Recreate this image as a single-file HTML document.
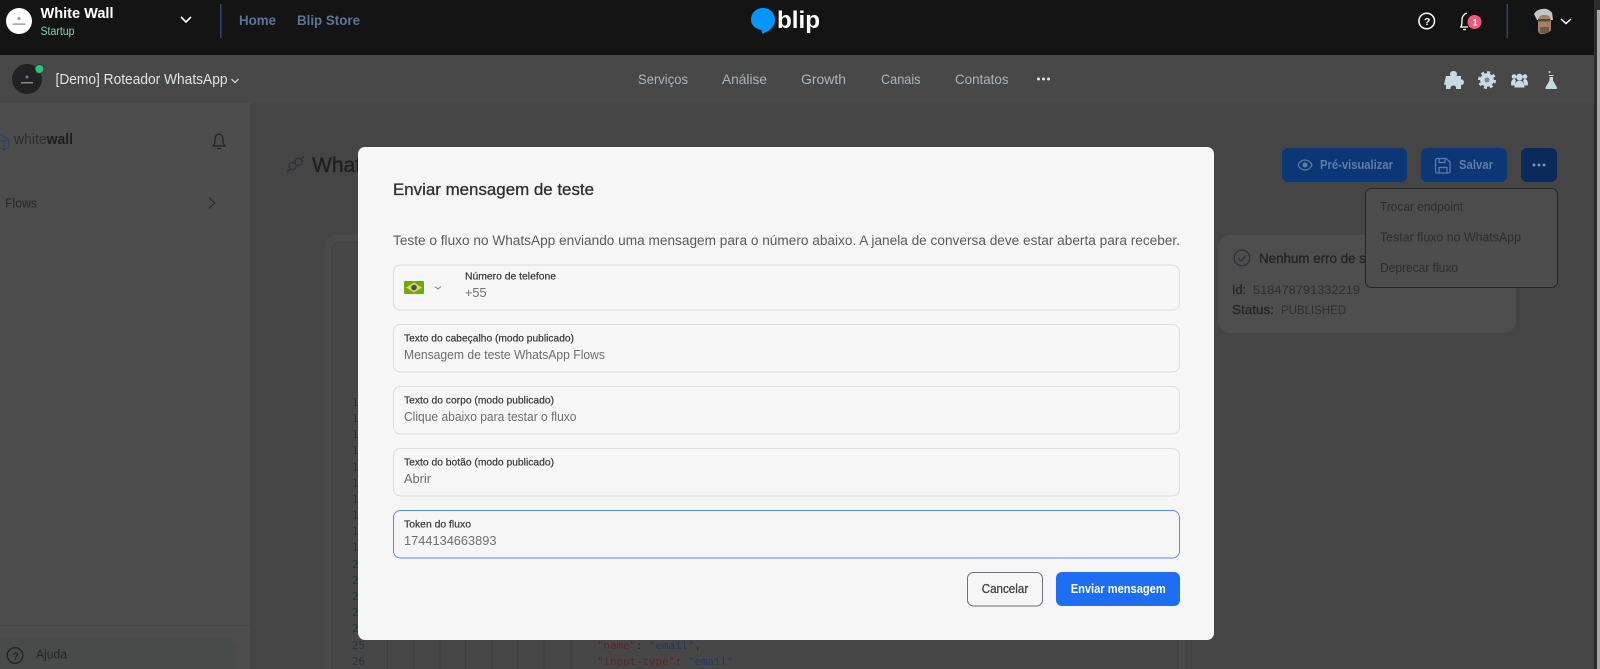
<!DOCTYPE html>
<html lang="pt-BR">
<head>
<meta charset="utf-8">
<title>Enviar mensagem de teste</title>
<style>
html,body{margin:0;padding:0;width:1600px;height:669px;overflow:hidden;background:#454545}
svg{display:block}
text{font-family:"Liberation Sans",sans-serif}
.m{font-family:"DejaVu Sans Mono","Liberation Mono",monospace;font-size:10.8px}
.lab{font-size:10.5px;fill:#3a3a3a;stroke:#3a3a3a;stroke-width:.22px}
.val{font-size:12.5px;fill:#6e6e6e}
.nav{font-size:14px;fill:#a9b5bb}
.dd{font-size:13px;fill:#2c2c2c}
.ln{fill:#1f3744}
</style>
</head>
<body>
<svg width="1600" height="669" viewBox="0 0 1600 669" xmlns="http://www.w3.org/2000/svg">
<defs><clipPath id="ua"><circle cx="1542" cy="21" r="13"/></clipPath></defs>
<rect width="1600" height="669" fill="#454545"/>

<!-- top bar -->
<rect width="1600" height="55" fill="#141414"/>
<circle cx="19" cy="21" r="13" fill="#fff"/>
<circle cx="19" cy="18.500" r="1.600" fill="#8ea6cf"/>
<rect x="12.500" y="23.500" width="13" height="1.200" fill="#888"/>
<text x="40.500" y="18" font-size="15" font-weight="700" fill="#fff" textLength="73" lengthAdjust="spacingAndGlyphs">White Wall</text>
<text x="40.500" y="35" font-size="11.500" fill="#7fd5a5" textLength="34" lengthAdjust="spacingAndGlyphs">Startup</text>
<path d="M181 17l5 5 5-5" fill="none" stroke="#fff" stroke-width="1.600"/>
<rect x="220" y="4" width="1.600" height="34" fill="#2c4568"/>
<text x="239" y="25" font-size="14" font-weight="700" fill="#5b7698" textLength="37" lengthAdjust="spacingAndGlyphs">Home</text>
<text x="297" y="25" font-size="14" font-weight="700" fill="#5b7698" textLength="63" lengthAdjust="spacingAndGlyphs">Blip Store</text>

<!-- blip logo -->
<path d="M763 8c7 0 12 5 12 12 0 6-4 10-9 12l-3.500 2-1-4c-6-1-10.500-5-10.500-10 0-7 5-12 12-12z" fill="#0096fa"/>
<text x="777" y="28" font-size="24" font-weight="700" fill="#fff" textLength="43" lengthAdjust="spacingAndGlyphs">blip</text>

<!-- right top icons -->
<circle cx="1426.700" cy="21" r="7.800" fill="none" stroke="#fff" stroke-width="1.500"/>
<text x="1424" y="25" font-size="10.500" font-weight="700" fill="#fff">?</text>
<path d="M1461 27c1-2 1-4 1-7 0-4 2-6 5-7M1460 27h8M1463 29.500h3" fill="none" stroke="#fff" stroke-width="1.300"/>
<circle cx="1474.500" cy="22" r="7" fill="#f2587e"/>
<text x="1472.500" y="25.500" font-size="9" font-weight="700" fill="#fff">1</text>
<rect x="1506.500" y="4" width="1.600" height="34" fill="#2c4568"/>
<g clip-path="url(#ua)">
<rect x="1529" y="8" width="26" height="26" fill="#10141a"/>
<path d="M1534 14c3-6 14-7 18-2l1 8h-16z" fill="#c4c4c4"/>
<rect x="1538" y="15" width="13" height="20" rx="5" fill="#a9805f"/>
<rect x="1538" y="19" width="12" height="2.500" fill="#41503f"/>
<rect x="1540" y="27" width="9" height="6" fill="#6d5a48"/>
</g>
<path d="M1561 19l5 4.500 5-4.500" fill="none" stroke="#fff" stroke-width="1.500"/>

<!-- second bar -->
<rect y="55" width="1600" height="48" fill="#484848"/>
<circle cx="27" cy="79" r="15" fill="#222"/>
<circle cx="27" cy="77" r="1.500" fill="#5f7fb0"/>
<rect x="21" y="82" width="12" height="1.500" fill="#888"/>
<circle cx="39.500" cy="69" r="5" fill="#2f3a3a"/>
<circle cx="39.500" cy="69" r="4" fill="#22c874"/>
<text x="55.500" y="84" font-size="14.500" fill="#dfe4e7" textLength="172" lengthAdjust="spacingAndGlyphs">[Demo] Roteador WhatsApp</text>
<path d="M231.500 79l3.500 3.500 3.500-3.500" fill="none" stroke="#dfe4e7" stroke-width="1.200"/>
<text class="nav" x="638" y="84" textLength="50" lengthAdjust="spacingAndGlyphs">Serviços</text>
<text class="nav" x="722" y="84" textLength="45" lengthAdjust="spacingAndGlyphs">Análise</text>
<text class="nav" x="801" y="84" textLength="45" lengthAdjust="spacingAndGlyphs">Growth</text>
<text class="nav" x="881" y="84" textLength="39.500" lengthAdjust="spacingAndGlyphs">Canais</text>
<text class="nav" x="955" y="84" textLength="53.500" lengthAdjust="spacingAndGlyphs">Contatos</text>
<circle cx="1038.500" cy="79" r="1.500" fill="#dfe4e7"/><circle cx="1043.500" cy="79" r="1.500" fill="#dfe4e7"/><circle cx="1048.500" cy="79" r="1.500" fill="#dfe4e7"/>

<!-- toolbar icons -->
<g fill="#c6dce4">
<path d="M1446 76h4.500c-1-2-.5-5 3-5s4 3 3 5h4.500v4c1.500-1 1-1 2 0 1.500 1 1 5-1 5-.5 0-.5 0-1-.5v4.500h-5c.5-2-.5-3.500-2.500-3.500s-3.500 1.500-3 3.500h-4.500v-4.500c-1 .5-1.500.5-2 0z"/>
<circle cx="1487" cy="80" r="6.800"/>
<circle cx="1487" cy="80" r="7.800" fill="none" stroke="#c6dce4" stroke-width="2.400" stroke-dasharray="3.100 3"/>
<path d="M1511 84c0-3 1.500-5 3-5s1.500 1 2 2c-1 1-1 2.500-1 4.500h-3.500zM1528 84c0-3-1.500-5-3-5s-1.500 1-2 2c1 1 1 2.500 1 4.500h3.500zM1514.500 87.500c0-4 2-7 5-7s5 3 5 7z"/>
<circle cx="1519.500" cy="77" r="3.300"/><circle cx="1514" cy="76.500" r="2.300"/><circle cx="1525" cy="76.500" r="2.300"/>
<path d="M1549.500 77h3.500v3.500l4 7c.4 1 0 1.500-1 1.500h-9.500c-1 0-1.400-.5-1-1.500l4-7z"/>
<circle cx="1549.500" cy="72" r="1"/>
<rect x="1549" y="75" width="4.500" height="1"/>
</g>
<circle cx="1487" cy="80" r="2.500" fill="#7d8a90"/>

<!-- sidebar -->
<rect y="103" width="250" height="566" fill="#4d4d4d"/>
<rect y="625" width="250" height="1" fill="#444"/>
<path d="M0 134l5 3 4 3v7l-5 3-4-2M0 141h9M4 141v9" fill="none" stroke="#27436d" stroke-width="1.100"/>
<text x="14" y="144" font-size="14.500" fill="#2e2e2e" textLength="59" lengthAdjust="spacingAndGlyphs">white<tspan font-weight="700" fill="#1e1e1e">wall</tspan></text>
<path d="M213 146c2-2 2-4 2-7 0-3 2-5 4-5s4 2 4 5c0 3 0 5 2 7zM217 148.500h4" fill="none" stroke="#222" stroke-width="1.200"/>
<text x="5" y="207.500" font-size="12.500" fill="#262626" textLength="32" lengthAdjust="spacingAndGlyphs">Flows</text>
<path d="M209 197.500l5.500 5.500-5.500 5.500" fill="none" stroke="#2a2a2a" stroke-width="1.200"/>
<rect x="-10" y="638" width="246" height="40" rx="10" fill="#474c4b"/>
<circle cx="15" cy="655.500" r="7.800" fill="none" stroke="#222" stroke-width="1.300"/>
<text x="12.500" y="659.500" font-size="10.500" font-weight="700" fill="#222">?</text>
<text x="36" y="658.500" font-size="12.500" fill="#262626" textLength="31" lengthAdjust="spacingAndGlyphs">Ajuda</text>

<!-- page title -->
<g fill="none" stroke="#2a2f3c" stroke-width="1.100">
<path d="M287 172l3-3"/><circle cx="292.500" cy="166" r="3.600"/><circle cx="298.500" cy="162" r="3.600"/><path d="M301 159l3-3"/>
</g>
<text x="312" y="172" font-size="21" fill="#1f1f1f" stroke="#1f1f1f" stroke-width=".35">WhatsApp Flows</text>

<!-- code panel -->
<rect x="325" y="235" width="860" height="460" rx="12" fill="#4a4a4a"/>
<rect x="332" y="242" width="846" height="460" rx="8" fill="#474747" stroke="#424242"/>
<g stroke="#3f3f3f" stroke-width="1">
<path d="M387.500 242V669M413.500 242V669M440 242V669M465.500 242V669M492 242V669M518 242V669M544 242V669M571 242V669"/>
</g>
<g class="m">
<text class="m ln" x="352" y="406">10</text><text class="m ln" x="352" y="422">11</text><text class="m ln" x="352" y="438">12</text><text class="m ln" x="352" y="454">13</text><text class="m ln" x="352" y="471">14</text><text class="m ln" x="352" y="487">15</text><text class="m ln" x="352" y="503">16</text><text class="m ln" x="352" y="519">17</text><text class="m ln" x="352" y="535">18</text><text class="m ln" x="352" y="551">19</text><text class="m ln" x="352" y="568">20</text><text class="m ln" x="352" y="584">21</text><text class="m ln" x="352" y="600">22</text><text class="m ln" x="352" y="616">23</text><text class="m ln" x="352" y="632">24</text><text class="m ln" x="352" y="649">25</text><text class="m ln" x="352" y="665">26</text>
<text class="m" x="597" y="649"><tspan fill="#5b2626">"name"</tspan><tspan fill="#2a2a2a">: </tspan><tspan fill="#1f3a5c">"email"</tspan><tspan fill="#2a2a2a">,</tspan></text>
<text class="m" x="597" y="665"><tspan fill="#5b2626">"input-type"</tspan><tspan fill="#2a2a2a">: </tspan><tspan fill="#1f3a5c">"email"</tspan></text>
</g>

<!-- action buttons -->
<rect x="1282" y="148" width="125" height="34" rx="6" fill="#0c3777"/>
<path d="M1298 165c2-4 4.500-5 7-5s5 1 7 5c-2 4-4.500 5-7 5s-5-1-7-5z" fill="none" stroke="#5f7ea6" stroke-width="1.200"/>
<circle cx="1305" cy="165" r="2.500" fill="#5f7ea6"/>
<text x="1320" y="169" font-size="12.500" font-weight="700" fill="#5f7ea6" textLength="73" lengthAdjust="spacingAndGlyphs">Pré-visualizar</text>
<rect x="1421" y="148" width="86" height="34" rx="6" fill="#0c3777"/>
<path d="M1437 158.500h9l4 3.500v9.500a1.500 1.500 0 0 1-1.500 1.500h-11.500a1.500 1.500 0 0 1-1.500-1.500v-11.500a1.500 1.500 0 0 1 1.500-1.500zM1439 158.500v4h6v-4M1439 172.500v-5h8v5" fill="none" stroke="#5f7ea6" stroke-width="1.200"/>
<text x="1459" y="169" font-size="12.500" font-weight="700" fill="#5f7ea6" textLength="34" lengthAdjust="spacingAndGlyphs">Salvar</text>
<rect x="1521" y="148" width="36" height="34" rx="6" fill="#0a2a5c"/>
<circle cx="1534" cy="165" r="1.500" fill="#7f93ad"/><circle cx="1539" cy="165" r="1.500" fill="#7f93ad"/><circle cx="1544" cy="165" r="1.500" fill="#7f93ad"/>

<!-- status card -->
<rect x="1218" y="235" width="298" height="98" rx="12" fill="#4e4e4e"/>
<circle cx="1242" cy="258" r="7.800" fill="none" stroke="#2b3038" stroke-width="1.200"/>
<path d="M1238 258l3 3 5-5.500" fill="none" stroke="#2b3038" stroke-width="1.200"/>
<text x="1259" y="263" font-size="13.500" fill="#242424" stroke="#242424" stroke-width=".3" textLength="107" lengthAdjust="spacingAndGlyphs">Nenhum erro de s</text>
<text x="1232" y="294" font-size="12.500" fill="#262626" stroke="#262626" stroke-width=".3" textLength="14" lengthAdjust="spacingAndGlyphs">Id:</text>
<text x="1253" y="294" font-size="12" fill="#2e2e2e" textLength="107" lengthAdjust="spacingAndGlyphs">518478791332219</text>
<text x="1232" y="314" font-size="12.500" fill="#262626" stroke="#262626" stroke-width=".3" textLength="42" lengthAdjust="spacingAndGlyphs">Status:</text>
<text x="1281" y="314" font-size="12" fill="#2e2e2e" textLength="65" lengthAdjust="spacingAndGlyphs">PUBLISHED</text>

<!-- dropdown -->
<rect x="1365.500" y="188.500" width="192" height="99" rx="6" fill="#4d4d4d" stroke="#262626"/>
<text class="dd" x="1380" y="211" textLength="83" lengthAdjust="spacingAndGlyphs">Trocar endpoint</text>
<text class="dd" x="1380" y="241.500" textLength="141" lengthAdjust="spacingAndGlyphs">Testar fluxo no WhatsApp</text>
<text class="dd" x="1380" y="272" textLength="78" lengthAdjust="spacingAndGlyphs">Deprecar fluxo</text>

<!-- scrollbar -->
<rect x="1594" y="0" width="3" height="669" fill="#2e2e2e"/>
<rect x="1597" y="10" width="3" height="659" fill="#a8a8a8"/>
<rect x="1597" y="0" width="3" height="10" fill="#2e2e2e"/>

<!-- modal -->
<rect x="358" y="147" width="856" height="493" rx="7" fill="#f6f6f6"/>
<text x="393" y="195" font-size="16.500" fill="#2f2f2f" stroke="#2f2f2f" stroke-width="0.300" textLength="201" lengthAdjust="spacingAndGlyphs">Enviar mensagem de teste</text>
<text x="393" y="245" font-size="13.500" fill="#5a5a5a" textLength="787" lengthAdjust="spacingAndGlyphs">Teste o fluxo no WhatsApp enviando uma mensagem para o número abaixo. A janela de conversa deve estar aberta para receber.</text>

<g fill="#f6f6f6" stroke="#dcdcdc" stroke-width="1">
<rect x="393.500" y="265" width="786" height="45" rx="7"/>
<rect x="393.500" y="324.500" width="786" height="47.500" rx="7"/>
<rect x="393.500" y="386.500" width="786" height="47.500" rx="7"/>
<rect x="393.500" y="448.500" width="786" height="47.500" rx="7"/>
</g>
<rect x="393.500" y="510.500" width="786" height="47.500" rx="7" fill="#f6f6f6" stroke="#5a8cf0" stroke-width="1"/>

<!-- flag -->
<rect x="404" y="281" width="20" height="13" rx="1" fill="#6da51e"/>
<path d="M414 282.500l8 5-8 5-8-5z" fill="#ecd43a"/>
<circle cx="414" cy="287.500" r="2.800" fill="#33518f"/>
<path d="M435 286.500l3 2.500 3-2.500" fill="none" stroke="#777" stroke-width=".9"/>
<text class="lab" x="465" y="279.500" textLength="91" lengthAdjust="spacingAndGlyphs">Número de telefone</text>
<text class="val" x="465" y="297" textLength="21.500" lengthAdjust="spacingAndGlyphs">+55</text>

<text class="lab" x="404" y="341.700" textLength="170" lengthAdjust="spacingAndGlyphs">Texto do cabeçalho (modo publicado)</text>
<text class="val" x="404" y="359" textLength="201" lengthAdjust="spacingAndGlyphs">Mensagem de teste WhatsApp Flows</text>
<text class="lab" x="404" y="403.700" textLength="150" lengthAdjust="spacingAndGlyphs">Texto do corpo (modo publicado)</text>
<text class="val" x="404" y="421" textLength="172.500" lengthAdjust="spacingAndGlyphs">Clique abaixo para testar o fluxo</text>
<text class="lab" x="404" y="465.700" textLength="150" lengthAdjust="spacingAndGlyphs">Texto do botão (modo publicado)</text>
<text class="val" x="404" y="483" textLength="27" lengthAdjust="spacingAndGlyphs">Abrir</text>
<text class="lab" x="404" y="527.700" textLength="67" lengthAdjust="spacingAndGlyphs">Token do fluxo</text>
<text class="val" x="404" y="545" textLength="92.500" lengthAdjust="spacingAndGlyphs">1744134663893</text>

<rect x="967.500" y="572.500" width="75" height="33.500" rx="6" fill="#f6f6f6" stroke="#6a6f78" stroke-width="1"/>
<text x="981.700" y="593" font-size="12.500" fill="#444" stroke="#444" stroke-width=".3" textLength="46.500" lengthAdjust="spacingAndGlyphs">Cancelar</text>
<rect x="1056" y="572" width="124" height="34" rx="6" fill="#1f6df0"/>
<text x="1070.700" y="593" font-size="12.500" font-weight="700" fill="#fff" textLength="95" lengthAdjust="spacingAndGlyphs">Enviar mensagem</text>
</svg>
</body>
</html>
